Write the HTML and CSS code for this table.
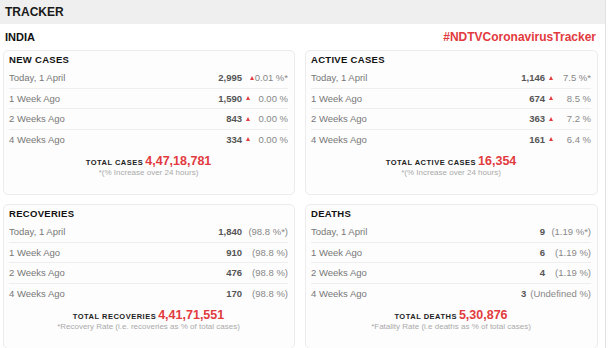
FILE: index.html
```html
<!DOCTYPE html>
<html lang="en">
<head>
    <meta charset="UTF-8">
    <meta name="viewport" content="width=device-width, initial-scale=1.0">
    <title>Coronavirus Tracker</title>
    <link rel="stylesheet" href="styles.css">
</head>
<body>
    <div class="tracker">
        <div class="tracker-head">TRACKER</div>

        <div class="tracker-body">
            <div class="region-row">
                <div class="region">INDIA</div>
                <div class="hashtag">#NDTVCoronavirusTracker</div>
            </div>

            <div class="card-grid">
                <div class="card">
                    <div class="card-title">NEW CASES</div>
                    <div class="row">
                        <span class="label">Today, 1 April</span>
                        <span class="val">2,995</span>
                        <span class="pct tight"><i class="up"></i>0.01 %*</span>
                    </div>
                    <div class="row">
                        <span class="label">1 Week Ago</span>
                        <span class="val">1,590</span>
                        <span class="pct"><i class="up"></i>0.00 %</span>
                    </div>
                    <div class="row">
                        <span class="label">2 Weeks Ago</span>
                        <span class="val">843</span>
                        <span class="pct"><i class="up"></i>0.00 %</span>
                    </div>
                    <div class="row">
                        <span class="label">4 Weeks Ago</span>
                        <span class="val">334</span>
                        <span class="pct"><i class="up"></i>0.00 %</span>
                    </div>
                    <div class="total">
                        <span class="total-label">TOTAL CASES</span>
                        <span class="total-num">4,47,18,781</span>
                    </div>
                    <div class="note">*(% Increase over 24 hours)</div>
                </div>

                <div class="card">
                    <div class="card-title">ACTIVE CASES</div>
                    <div class="row">
                        <span class="label">Today, 1 April</span>
                        <span class="val">1,146</span>
                        <span class="pct"><i class="up"></i>7.5 %*</span>
                    </div>
                    <div class="row">
                        <span class="label">1 Week Ago</span>
                        <span class="val">674</span>
                        <span class="pct"><i class="up"></i>8.5 %</span>
                    </div>
                    <div class="row">
                        <span class="label">2 Weeks Ago</span>
                        <span class="val">363</span>
                        <span class="pct"><i class="up"></i>7.2 %</span>
                    </div>
                    <div class="row">
                        <span class="label">4 Weeks Ago</span>
                        <span class="val">161</span>
                        <span class="pct"><i class="up"></i>6.4 %</span>
                    </div>
                    <div class="total">
                        <span class="total-label">TOTAL ACTIVE CASES</span>
                        <span class="total-num">16,354</span>
                    </div>
                    <div class="note">*(% Increase over 24 hours)</div>
                </div>

                <div class="card">
                    <div class="card-title">RECOVERIES</div>
                    <div class="row">
                        <span class="label">Today, 1 April</span>
                        <span class="val">1,840</span>
                        <span class="pct">(98.8 %*)</span>
                    </div>
                    <div class="row">
                        <span class="label">1 Week Ago</span>
                        <span class="val">910</span>
                        <span class="pct">(98.8 %)</span>
                    </div>
                    <div class="row">
                        <span class="label">2 Weeks Ago</span>
                        <span class="val">476</span>
                        <span class="pct">(98.8 %)</span>
                    </div>
                    <div class="row">
                        <span class="label">4 Weeks Ago</span>
                        <span class="val">170</span>
                        <span class="pct">(98.8 %)</span>
                    </div>
                    <div class="total">
                        <span class="total-label">TOTAL RECOVERIES</span>
                        <span class="total-num">4,41,71,551</span>
                    </div>
                    <div class="note">*Recovery Rate (i.e. recoveries as % of total cases)</div>
                </div>

                <div class="card">
                    <div class="card-title">DEATHS</div>
                    <div class="row">
                        <span class="label">Today, 1 April</span>
                        <span class="val">9</span>
                        <span class="pct">(1.19 %*)</span>
                    </div>
                    <div class="row">
                        <span class="label">1 Week Ago</span>
                        <span class="val">6</span>
                        <span class="pct">(1.19 %)</span>
                    </div>
                    <div class="row">
                        <span class="label">2 Weeks Ago</span>
                        <span class="val">4</span>
                        <span class="pct">(1.19 %)</span>
                    </div>
                    <div class="row">
                        <span class="label">4 Weeks Ago</span>
                        <span class="val">3</span>
                        <span class="pct">(Undefined %)</span>
                    </div>
                    <div class="total">
                        <span class="total-label">TOTAL DEATHS</span>
                        <span class="total-num">5,30,876</span>
                    </div>
                    <div class="note">*Fatality Rate (i.e deaths as % of total cases)</div>
                </div>
            </div>
        </div>
    </div>
</body>
</html>
```

FILE: styles.css
```css
body {
    margin: 0;
    background-color: #fff;
    font-family: 'Liberation Sans', Arial, sans-serif;
}

.tracker {
    width: 605px;
    border-right: 1px solid #e2e2e2;
}

.tracker-head {
    background-color: #efefef;
    height: 24px;
    line-height: 24px;
    padding-left: 5px;
    font-size: 12px;
    font-weight: 700;
    color: #1a1a1a;
}

.tracker-body {
    padding: 0 7px 0 3px;
}

.region-row {
    display: flex;
    justify-content: space-between;
    align-items: center;
    height: 26px;
    padding: 0 2px;
}

.region {
    font-size: 11px;
    font-weight: 700;
    color: #111;
}

.hashtag {
    font-size: 12px;
    font-weight: 700;
    color: #e23a3e;
}

.card-grid {
    display: grid;
    grid-template-columns: 292px 293px;
    column-gap: 10px;
    row-gap: 9px;
}

.card {
    background-color: #fdfdfd;
    border: 1px solid #ececec;
    border-radius: 5px;
    padding: 3px 6px 16px 5px;
}

.card-title {
    font-size: 9.5px;
    font-weight: 700;
    letter-spacing: 0.3px;
    line-height: 12px;
    color: #111;
    margin-bottom: 2px;
}

.row {
    display: flex;
    align-items: center;
    height: 19.5px;
    font-size: 9.5px;
    border-bottom: 1px solid #eee;
}

.card .row:nth-child(5) {
    border-bottom: none;
}

.label {
    flex: 1;
    color: #777;
}

.val {
    font-weight: 700;
    color: #555;
    margin-right: 4px;
}

.pct {
    display: flex;
    justify-content: flex-end;
    align-items: center;
    min-width: 42px;
    color: #888;
    white-space: pre;
}

.pct .up {
    width: 0;
    height: 0;
    border-left: 2.5px solid transparent;
    border-right: 2.5px solid transparent;
    border-bottom: 4px solid #e23a3e;
    margin-right: auto;
}

.pct.tight .up {
    margin-right: 1px;
}

.total {
    text-align: center;
    margin-top: 6px;
    line-height: 13px;
    font-size: 7px;
}

.total-label {
    font-size: 7.5px;
    font-weight: 700;
    letter-spacing: 0.5px;
    color: #222;
}

.total-num {
    font-size: 12.5px;
    font-weight: 700;
    color: #e23a3e;
}

.note {
    text-align: center;
    font-size: 8px;
    line-height: 10px;
    margin-top: -1px;
    color: #aaa;
}
```
